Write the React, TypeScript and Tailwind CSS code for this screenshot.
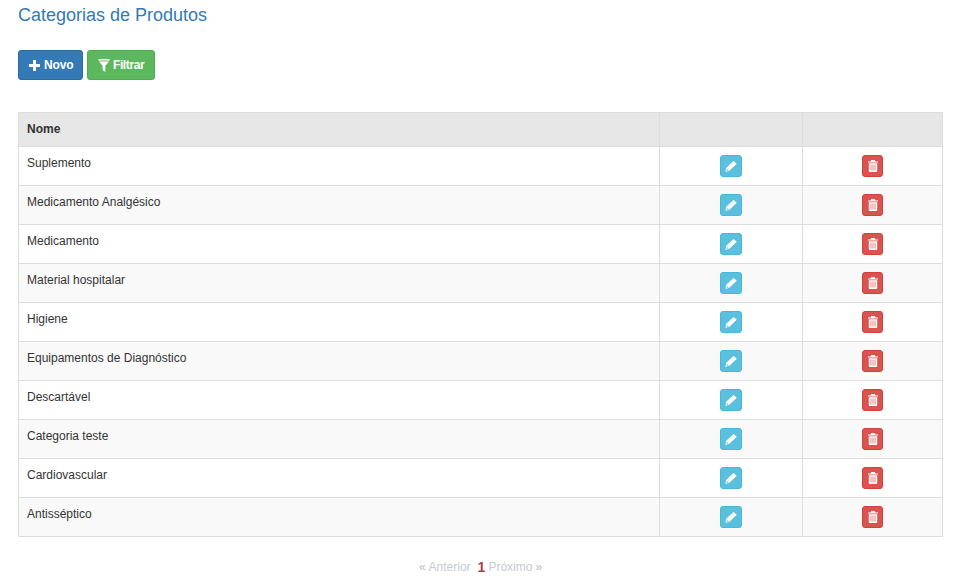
const CATEGORIES = [
  'Suplemento',
  'Medicamento Analgésico',
  'Medicamento',
  'Material hospitalar',
  'Higiene',
  'Equipamentos de Diagnóstico',
  'Descartável',
  'Categoria teste',
  'Cardiovascular',
  'Antisséptico',
];

function PlusIcon() {
  return (
    <svg width="11" height="11" viewBox="0 0 11 11" fill="currentColor">
      <path d="M4 0h3v4h4v3H7v4H4V7H0V4h4z" />
    </svg>
  );
}

function FilterIcon() {
  return (
    <svg width="12" height="13" viewBox="0 0 12 13" fill="currentColor">
      <path d="M0.5 0h11v1.4H0.5zM1 2.4h10L7.4 6.8V13L4.6 11V6.8z" />
    </svg>
  );
}

function PencilIcon() {
  return (
    <svg width="12" height="11" viewBox="0 0 12 11" fill="currentColor">
      <path d="M8.6 0 11.8 2.8 4.6 9.6 0.5 11 1.2 6.8zM1.9 8 1.5 9.9 3.4 9.2z" fillRule="evenodd" />
    </svg>
  );
}

function TrashIcon() {
  return (
    <svg width="10" height="12" viewBox="0 0 10 12" fill="currentColor">
      <path
        fillRule="evenodd"
        d="M3.3 0h3.4l.7 1.4H10v1.2H0V1.4h2.6zM0.8 3.2h8.4V11a1 1 0 0 1-1 1H1.8a1 1 0 0 1-1-1zM2.6 4.4v6h.7v-6zM4.65 4.4v6h.7v-6zM6.7 4.4v6h.7v-6z"
      />
    </svg>
  );
}

export default function App() {
  return (
    <div className="min-h-[583px] bg-white px-[18px] pt-[5px] font-['Liberation_Sans',Arial,sans-serif] text-[12px] leading-[17px] text-[#333]">
      <h1 className="text-[18px] leading-5 font-normal text-[#337ab7]">Categorias de Produtos</h1>

      <div className="mt-[25px] flex gap-1">
        <button className="flex h-[30px] w-[65px] items-center gap-[4px] rounded-[3px] border border-[#2e6da4] bg-[#337ab7] pl-[10px] font-bold text-white">
          <PlusIcon />
          <span className="tracking-[-0.1px]">Novo</span>
        </button>
        <button className="flex h-[30px] w-[68px] items-center gap-[3px] rounded-[3px] border border-[#4cae4c] bg-[#5cb85c] pl-[10px] font-bold text-white">
          <FilterIcon />
          <span className="tracking-[-0.4px]">Filtrar</span>
        </button>
      </div>

      <table className="mt-8 w-[924px] table-fixed border-collapse">
        <colgroup>
          <col className="w-[641px]" />
          <col className="w-[143px]" />
          <col className="w-[140px]" />
        </colgroup>
        <thead>
          <tr className="h-[34px] bg-[#e6e6e6]">
            <th className="border border-[#ddd] px-2 text-left font-bold">Nome</th>
            <th className="border border-[#ddd]" />
            <th className="border border-[#ddd]" />
          </tr>
        </thead>
        <tbody>
          {CATEGORIES.map((name, idx) => (
            <tr key={name} className={idx % 2 === 1 ? 'h-[39px] bg-[#f9f9f9]' : 'h-[39px] bg-white'}>
              <td className="border border-[#ddd] px-2 pt-2 pb-[13px] align-top">{name}</td>
              <td className="border border-[#ddd] p-0 align-middle">
                <button className="mx-auto flex h-[22px] w-[22px] items-center justify-center rounded-[3px] border border-[#46b8da] bg-[#5bc0de] text-white">
                  <PencilIcon />
                </button>
              </td>
              <td className="border border-[#ddd] p-0 align-middle">
                <button className="mx-auto flex h-[22px] w-[21px] items-center justify-center rounded-[3px] border border-[#d43f3a] bg-[#d9534f] text-white">
                  <TrashIcon />
                </button>
              </td>
            </tr>
          ))}
        </tbody>
      </table>

      <div className="mt-[22px] flex justify-center pr-[1px] text-[12px] text-[#c5cad3]">
        <span className="text-[#bbb]">«</span>
        <span className="ml-[3px]">Anterior</span>
        <span className="ml-[7px] mr-[3px] text-[14px] leading-[17px] font-bold text-[#a94442]">1</span>
        <span>Próximo</span>
        <span className="ml-[3px] text-[#bbb]">»</span>
      </div>
    </div>
  );
}
